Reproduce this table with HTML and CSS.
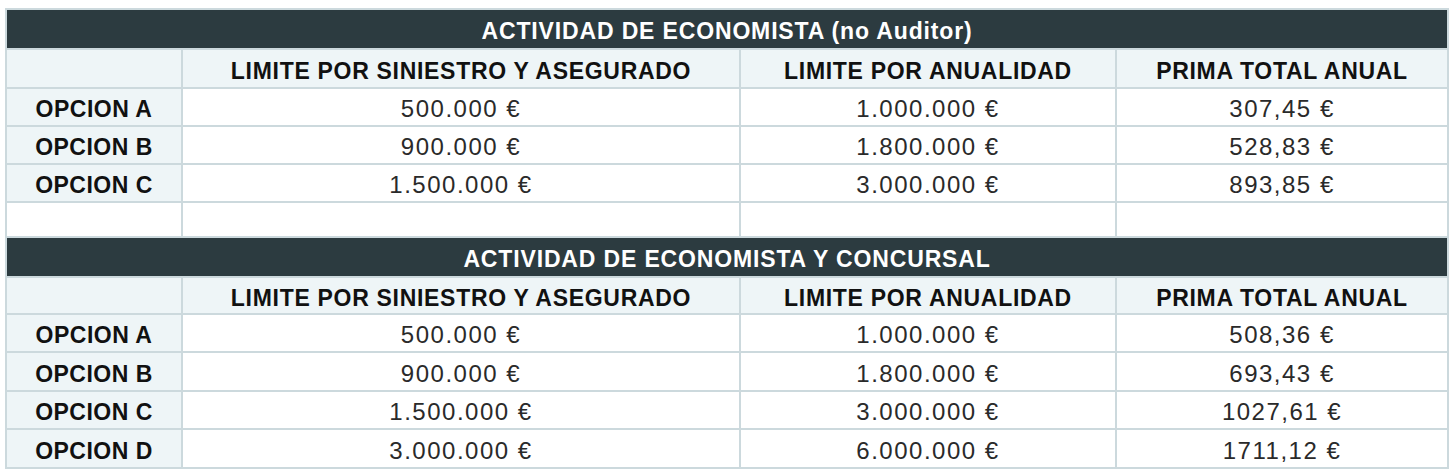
FILE: index.html
```html
<!DOCTYPE html>
<html lang="es">
<head>
<meta charset="utf-8">
<title>Tarifas Economista</title>
<link rel="stylesheet" href="styles.css">
</head>
<body>
<table class="rates">
  <colgroup>
    <col class="c-opt">
    <col class="c-lim">
    <col class="c-anu">
    <col class="c-pri">
  </colgroup>
  <tbody>
    <tr class="r-title r-t1"><td colspan="4" class="title">ACTIVIDAD DE ECONOMISTA (no Auditor)</td></tr>
    <tr class="r-head r-h1"><td class="head"></td><td class="head">LIMITE POR SINIESTRO Y ASEGURADO</td><td class="head">LIMITE POR ANUALIDAD</td><td class="head">PRIMA TOTAL ANUAL</td></tr>
    <tr class="r-data"><td class="opt">OPCION A</td><td class="val">500.000 €</td><td class="val">1.000.000 €</td><td class="val">307,45 €</td></tr>
    <tr class="r-data"><td class="opt">OPCION B</td><td class="val">900.000 €</td><td class="val">1.800.000 €</td><td class="val">528,83 €</td></tr>
    <tr class="r-data"><td class="opt">OPCION C</td><td class="val">1.500.000 €</td><td class="val">3.000.000 €</td><td class="val">893,85 €</td></tr>
    <tr class="r-blank"><td class="val"></td><td class="val"></td><td class="val"></td><td class="val"></td></tr>
    <tr class="r-title r-t2"><td colspan="4" class="title">ACTIVIDAD DE ECONOMISTA Y CONCURSAL</td></tr>
    <tr class="r-head r-h2"><td class="head"></td><td class="head">LIMITE POR SINIESTRO Y ASEGURADO</td><td class="head">LIMITE POR ANUALIDAD</td><td class="head">PRIMA TOTAL ANUAL</td></tr>
    <tr class="r-data"><td class="opt">OPCION A</td><td class="val">500.000 €</td><td class="val">1.000.000 €</td><td class="val">508,36 €</td></tr>
    <tr class="r-data r-tall"><td class="opt">OPCION B</td><td class="val">900.000 €</td><td class="val">1.800.000 €</td><td class="val">693,43 €</td></tr>
    <tr class="r-data"><td class="opt">OPCION C</td><td class="val">1.500.000 €</td><td class="val">3.000.000 €</td><td class="val">1027,61 €</td></tr>
    <tr class="r-data r-tall"><td class="opt">OPCION D</td><td class="val">3.000.000 €</td><td class="val">6.000.000 €</td><td class="val">1711,12 €</td></tr>
  </tbody>
</table>
</body>
</html>
```

FILE: styles.css
```css
html, body {
  margin: 0;
  padding: 0;
  background: #ffffff;
}

body {
  padding: 8px 0 0 5px;
  font-family: "Liberation Sans", Arial, Helvetica, sans-serif;
}

.rates {
  border-collapse: separate;
  border-spacing: 2px;
  background: #ccd9dd;
  width: 1444px;
  table-layout: fixed;
}

.c-opt { width: 174px; }
.c-lim { width: 556px; }
.c-anu { width: 374px; }
.c-pri { width: 330px; }

.rates td {
  padding: 4px 0 0;
  text-align: center;
  vertical-align: middle;
  white-space: nowrap;
  line-height: 26px;
}

.r-data { height: 36px; }
.r-tall { height: 37px; }
.r-t1 { height: 38px; }
.r-t2 { height: 38px; }
.r-h1 { height: 37px; }
.r-h2 { height: 35px; }
.r-blank { height: 33px; }

.title {
  background: #2c3b40;
  color: #ffffff;
  font-weight: bold;
  font-size: 23px;
  letter-spacing: 0.85px;
}

.head {
  background: #eef5f7;
  color: #111111;
  font-weight: bold;
  font-size: 23px;
  letter-spacing: 0.7px;
}

.opt {
  background: #eef5f7;
  color: #111111;
  font-weight: bold;
  font-size: 23px;
  letter-spacing: 0.5px;
}

.val {
  background: #ffffff;
  color: #2a2a2a;
  font-size: 24px;
  letter-spacing: 1.5px;
}
```
